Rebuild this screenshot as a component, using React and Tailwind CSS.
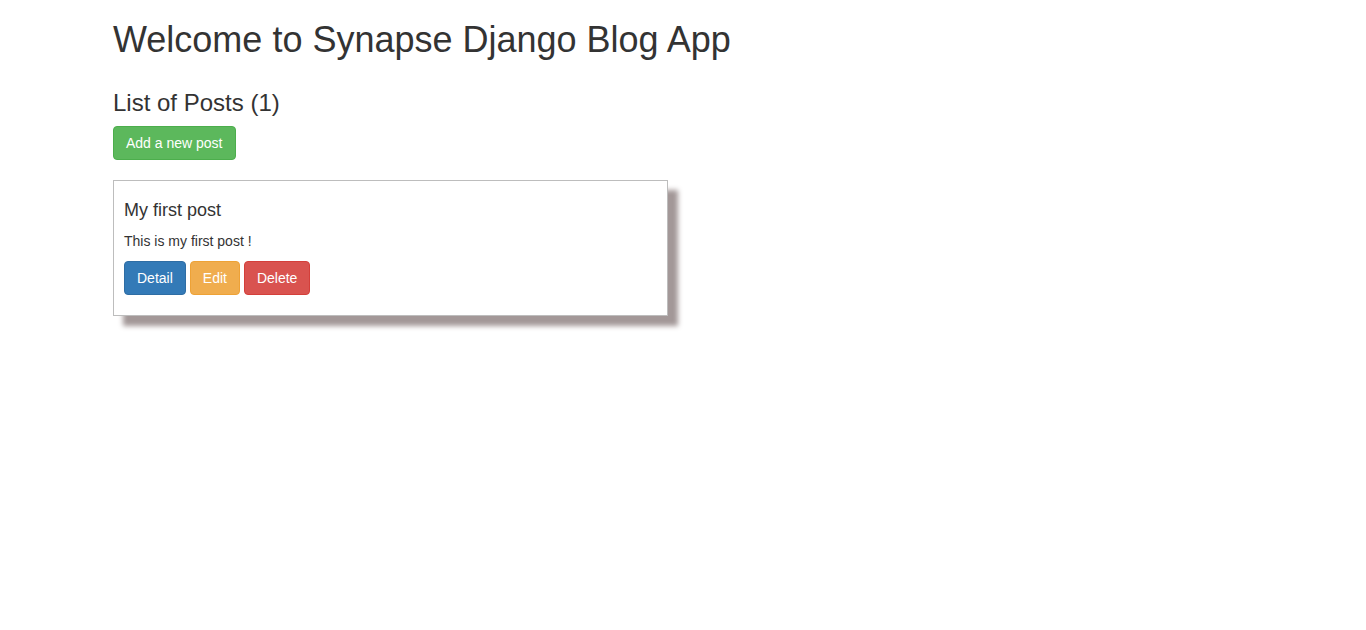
export default function App() {
  return (
    <div className="min-h-screen bg-white text-[#333] text-[14px] leading-[20px] font-['Liberation_Sans',Arial,sans-serif]">
      <div className="w-[1170px] mx-auto px-[15px]">
        {/* Page header */}
        <h1 className="mt-[20px] mb-[10px] text-[36px] leading-[1.1]">
          Welcome to Synapse Django Blog App
        </h1>

        <h3 className="mt-[30px] mb-[10px] text-[24px] leading-[1.1]">
          List of Posts (1)
        </h3>
        <button className="h-[34px] px-[12px] border border-[#4cae4c] bg-[#5cb85c] text-white rounded-[4px]">
          Add a new post
        </button>

        {/* Post card */}
        <div className="mt-[20px] w-[555px] border border-[#bdbdbd] bg-white px-[10px] pt-[10px] pb-[10px] shadow-[10px_10px_5px_#a39898]">
          <h4 className="mt-[10px] mb-[10px] text-[18px] leading-[1.1]">
            My first post
          </h4>
          <p className="mb-[10px]">This is my first post !</p>
          <div className="flex gap-[4px] mb-[10px]">
            <button className="h-[34px] px-[12px] border border-[#2e6da4] bg-[#337ab7] text-white rounded-[4px]">
              Detail
            </button>
            <button className="h-[34px] px-[12px] border border-[#eea236] bg-[#f0ad4e] text-white rounded-[4px]">
              Edit
            </button>
            <button className="h-[34px] px-[12px] border border-[#d43f3a] bg-[#d9534f] text-white rounded-[4px]">
              Delete
            </button>
          </div>
        </div>
      </div>
    </div>
  );
}
